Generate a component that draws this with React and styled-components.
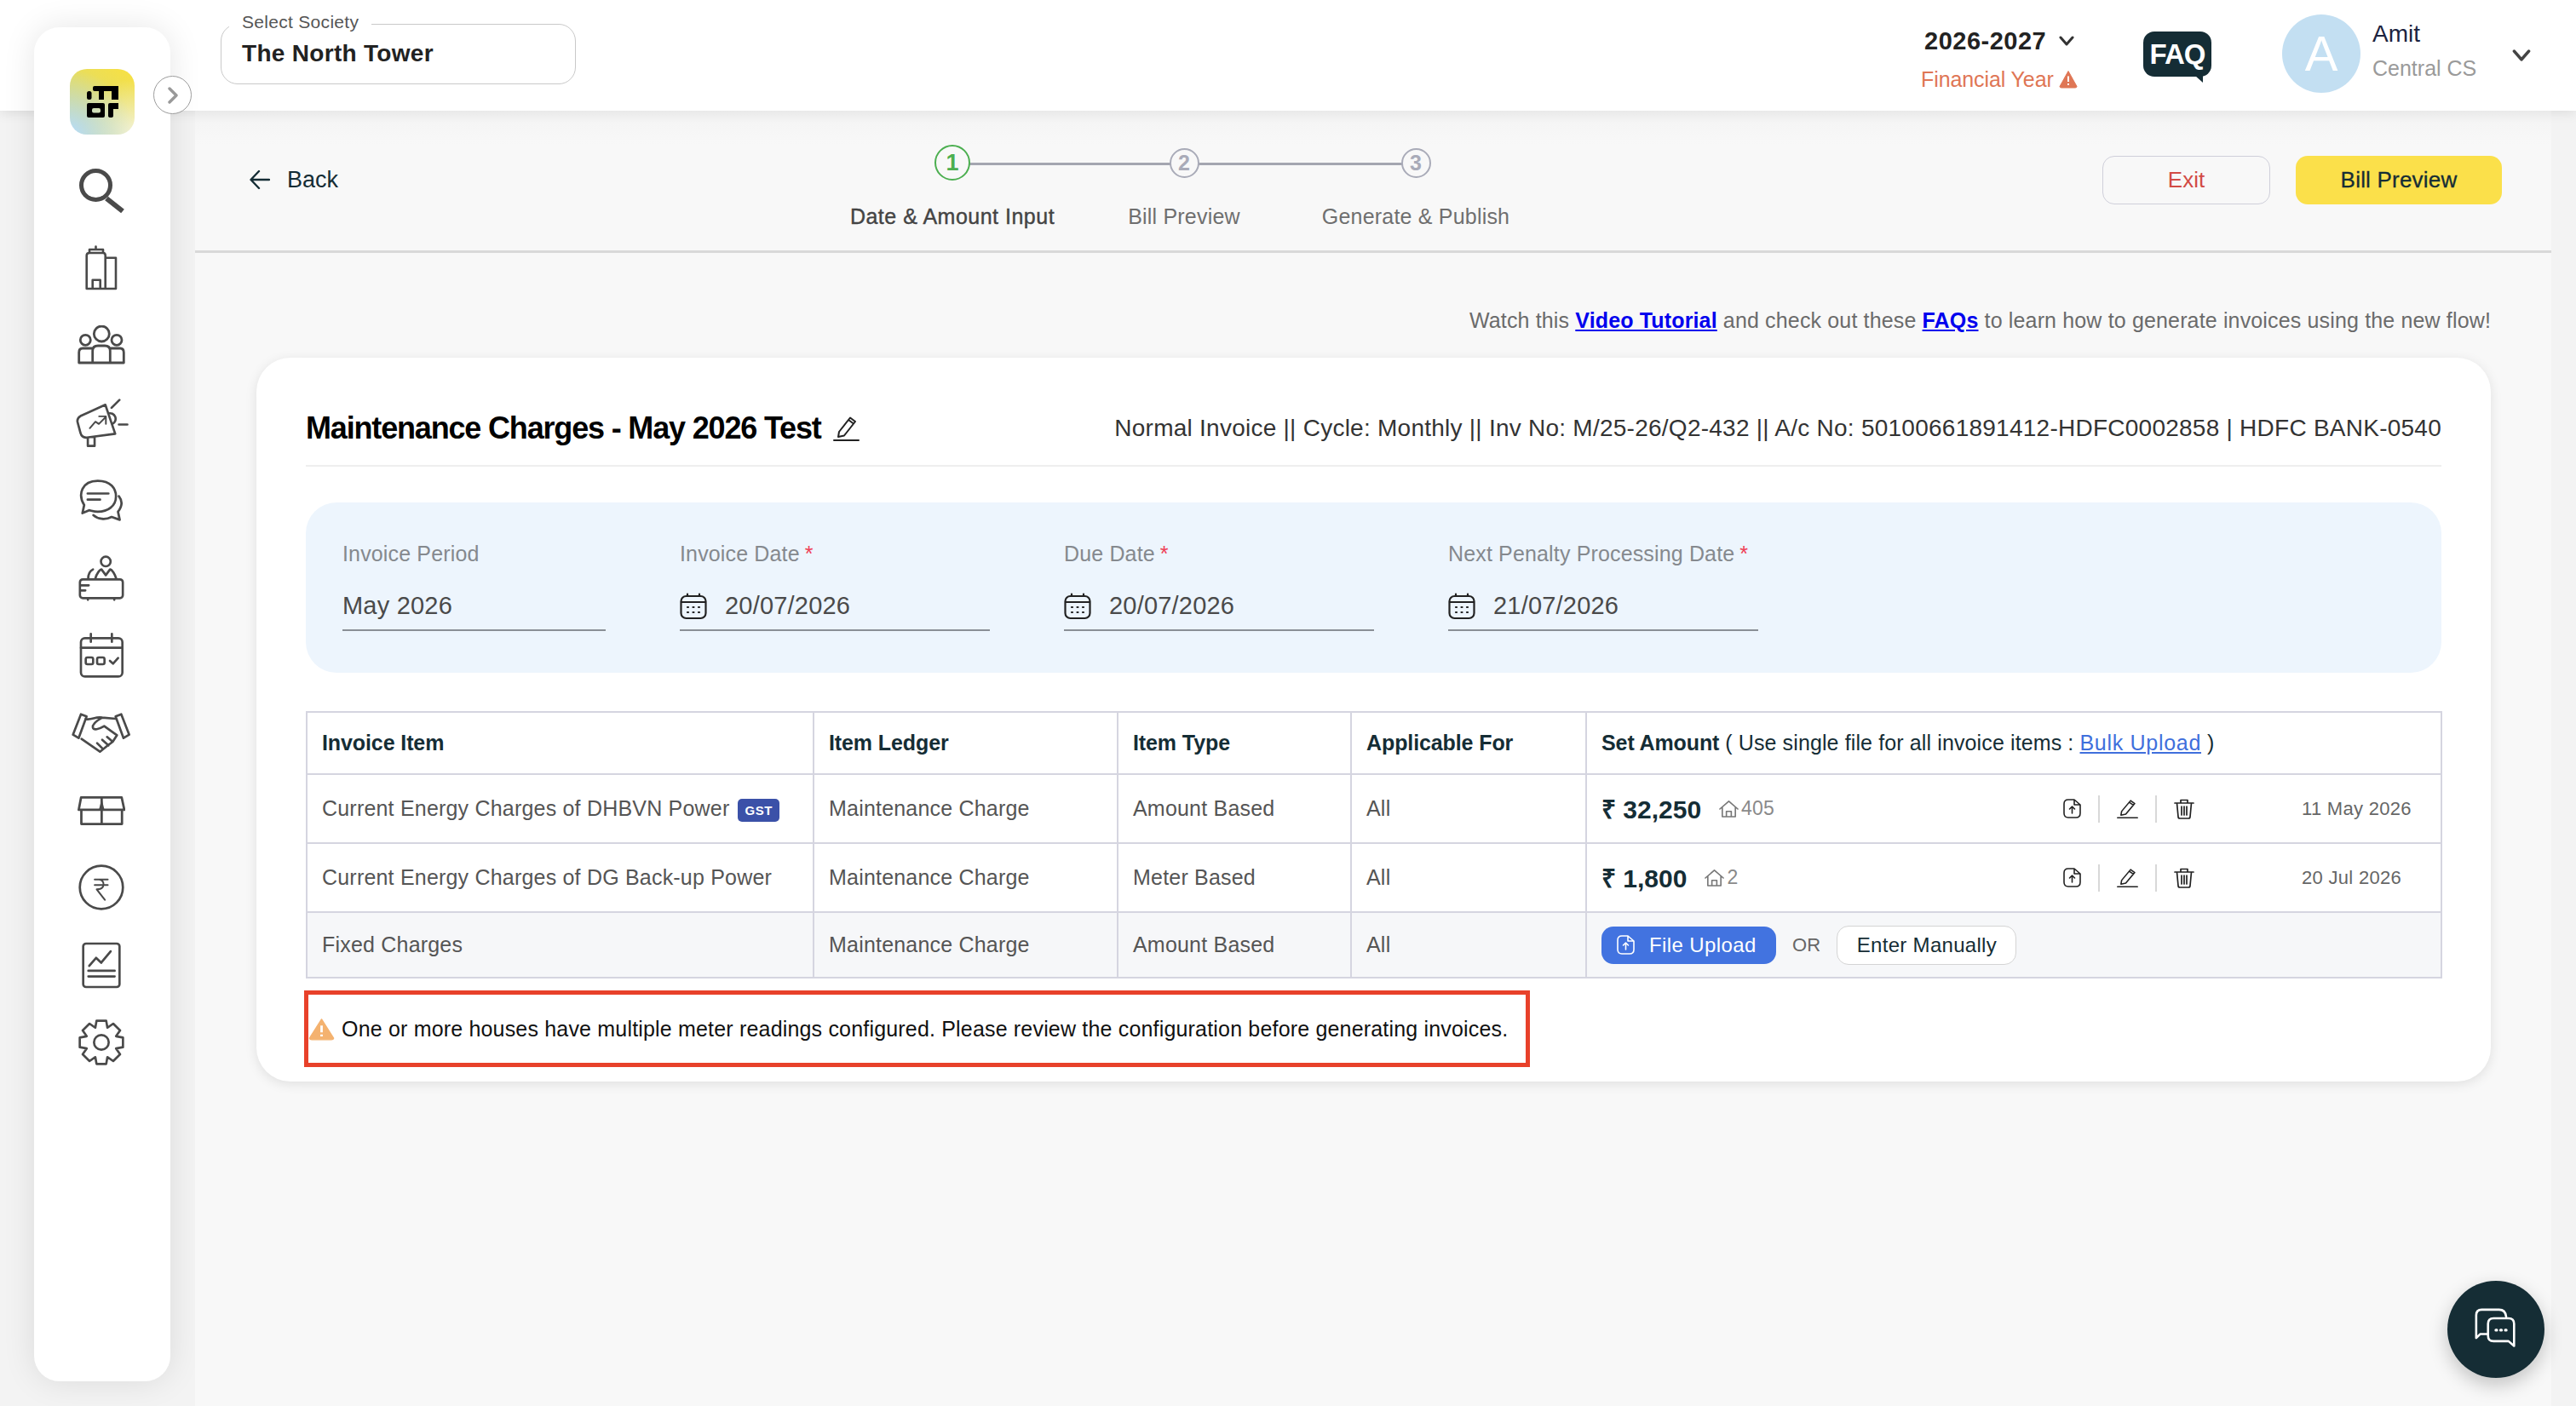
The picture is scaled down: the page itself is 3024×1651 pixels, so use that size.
import React from "react";
import styled, { createGlobalStyle } from "styled-components";

const FONT = `"Liberation Sans", Arial, sans-serif`;
const DARK = "#152d35";

const Global = createGlobalStyle`
	* { box-sizing: border-box; }
	html, body { margin: 0; height: 100%; overflow: hidden; }
	body { background: #f3f3f3; font-family: ${FONT}; color: #333; }
`;

const Page = styled.div`
	display: flex;
	flex-direction: column;
	height: 1651px;
`;

/* header */
const Header = styled.header`
	position: relative;
	z-index: 1;
	display: flex;
	align-items: flex-start;
	height: 130px;
	padding-left: 259px;
	background: #fff;
	box-shadow: 0 2px 14px rgba(0, 0, 0, 0.1);
`;

const SocietyBox = styled.div`
	position: relative;
	width: 417px;
	height: 71px;
	margin-top: 28px;
	padding: 17px 24px;
	border: 1.5px solid #c9c9c9;
	border-radius: 20px;
	font-size: 28px;
	font-weight: 700;
	line-height: 34px;
	color: #222;
	letter-spacing: 0.3px;
`;

const SocietyLabel = styled.span`
	position: absolute;
	left: 9px;
	top: -15px;
	padding: 0 15px;
	background: #fff;
	font-size: 21px;
	font-weight: 400;
	line-height: 24px;
	color: #555;
	letter-spacing: 0.3px;
`;

const HeaderRight = styled.div`
	display: flex;
	align-items: flex-start;
	margin-left: auto;
	padding-right: 53px;
`;

const YearBlock = styled.div`
	display: flex;
	flex-direction: column;
	align-items: flex-start;
	margin-top: 30px;
	width: 261px;
`;

const YearRow = styled.div`
	display: flex;
	align-items: center;
	gap: 15px;
	padding-left: 4px;
	font-size: 29px;
	font-weight: 700;
	line-height: 36px;
	letter-spacing: 0.5px;
	color: #222;
`;

const YearNote = styled.div`
	display: flex;
	align-items: center;
	gap: 6px;
	margin-top: 12px;
	font-size: 25px;
	line-height: 30px;
	letter-spacing: -0.1px;
	color: #df7655;
`;

const FaqBubble = styled.div`
	position: relative;
	width: 80px;
	height: 53px;
	margin-top: 37px;
	border-radius: 13px;
	background: ${DARK};
	color: #fff;
	font-size: 33px;
	font-weight: 700;
	line-height: 53px;
	text-align: center;
	letter-spacing: -1px;

	&::after {
		content: "";
		position: absolute;
		right: 10px;
		bottom: -7px;
		border-top: 8px solid ${DARK};
		border-left: 9px solid transparent;
	}
`;

const Avatar = styled.div`
	display: flex;
	align-items: center;
	justify-content: center;
	width: 92px;
	height: 92px;
	margin: 17px 14px 0 83px;
	border-radius: 50%;
	background: #c3dff2;
	color: #fff;
	font-size: 58px;
	line-height: 1;
`;

const UserBlock = styled.div`
	width: 164px;
	margin-top: 22px;
`;

const UserName = styled.div`
	font-size: 28px;
	line-height: 36px;
	color: #1c2340;
`;

const UserRole = styled.div`
	margin-top: 7px;
	font-size: 25px;
	line-height: 30px;
	color: #9a9a9a;
`;

const UserChevron = styled.div`
	margin-top: 54px;
	line-height: 0;
`;

/* sidebar */
const Sidebar = styled.aside`
	position: fixed;
	z-index: 2;
	left: 40px;
	top: 32px;
	display: flex;
	flex-direction: column;
	align-items: center;
	width: 160px;
	height: 1590px;
	padding-top: 49px;
	border-radius: 30px;
	background: #fff;
	box-shadow: 0 0 38px rgba(0, 0, 0, 0.1);
`;

const Logo = styled.div`
	display: flex;
	align-items: center;
	justify-content: center;
	width: 76px;
	height: 77px;
	margin-bottom: 21px;
	border-radius: 20px;
	background:
		radial-gradient(circle at 0% 100%, #b6dcfb 0, rgba(182, 220, 251, 0) 70%),
		radial-gradient(circle at 100% 100%, #f6f4d8 0, rgba(246, 244, 216, 0) 60%),
		linear-gradient(215deg, #f9e13f 0, #cfd88a 100%);
`;

const CollapseButton = styled.div`
	position: absolute;
	left: 140px;
	top: 57px;
	display: flex;
	align-items: center;
	justify-content: center;
	width: 45px;
	height: 45px;
	border: 1.5px solid #9c9c9c;
	border-radius: 50%;
	background: #fff;
`;

const NavSlot = styled.div`
	display: flex;
	align-items: center;
	justify-content: center;
	width: 100%;
	height: 90.9px;
	padding-right: ${(p) => p.$nudge || 3}px;
`;

/* main */
const Main = styled.main`
	position: relative;
	z-index: 3;
	flex: 1;
	margin: 0 29px 0 229px;
	background: linear-gradient(#e9e9e9 0, #f5f5f5 14px, #f8f8f8 40px);
`;

const TopBar = styled.div`
	display: grid;
	grid-template-columns: 753px 816px 1fr;
	height: 167px;
	border-bottom: 3px solid #d9d9d9;
`;

const BackLink = styled.div`
	display: flex;
	align-items: center;
	gap: 20px;
	height: 162px;
	padding-left: 64px;
	font-size: 27px;
	color: ${DARK};
`;

const Stepper = styled.div`
	display: grid;
	grid-template-columns: repeat(3, 1fr);
	padding-top: 40px;
`;

const Step = styled.div`
	position: relative;
	display: flex;
	flex-direction: column;
	align-items: center;
`;

const StepLine = styled.span`
	position: absolute;
	left: 50%;
	top: 21px;
	width: 100%;
	height: 3px;
	background: #a4a6b0;
`;

const StepCircleRow = styled.div`
	display: flex;
	align-items: center;
	justify-content: center;
	height: 42px;
`;

const StepCircle = styled.div`
	position: relative;
	display: flex;
	align-items: center;
	justify-content: center;
	width: ${(p) => (p.$active ? 42 : 35)}px;
	height: ${(p) => (p.$active ? 42 : 35)}px;
	border: 2.5px solid ${(p) => (p.$active ? "#4caf50" : "#a9abb8")};
	border-radius: 50%;
	background: #f8f8f8;
	color: ${(p) => (p.$active ? "#4caf50" : "#a9abb8")};
	font-size: ${(p) => (p.$active ? 27 : 25)}px;
	font-weight: 700;
	line-height: 1;
`;

const StepLabel = styled.div`
	margin-top: 27px;
	font-size: 25px;
	line-height: 30px;
	white-space: nowrap;
	color: ${(p) => (p.$active ? "#444" : "#6f6f6f")};
	letter-spacing: ${(p) => (p.$active ? 0.5 : 0.2)}px;
	-webkit-text-stroke: ${(p) => (p.$active ? 0.4 : 0)}px #444;
`;

const TopActions = styled.div`
	display: flex;
	justify-content: flex-end;
	gap: 30px;
	padding: 53px 58px 0 0;
`;

const ExitButton = styled.div`
	display: flex;
	align-items: center;
	justify-content: center;
	width: 197px;
	height: 57px;
	border: 1.5px solid #cfcfda;
	border-radius: 14px;
	color: #d24b45;
	font-size: 26px;
`;

const PreviewButton = styled.div`
	display: flex;
	align-items: center;
	justify-content: center;
	width: 242px;
	height: 57px;
	border-radius: 14px;
	background: #fbe04a;
	color: ${DARK};
	font-size: 26px;
	letter-spacing: 0.2px;
	-webkit-text-stroke: 0.3px ${DARK};
`;

const Content = styled.div`
	padding: 0 71px 0 72px;
`;

const InfoLine = styled.div`
	margin: 64px 0 29px;
	font-size: 25px;
	line-height: 30px;
	text-align: right;
	letter-spacing: 0.15px;
	color: #6b6b6b;

	a {
		color: #0000ee;
		font-weight: 700;
		text-decoration: underline;
	}
`;

const Card = styled.section`
	padding: 61px 58px 17px;
	border-radius: 40px;
	background: #fff;
	box-shadow: 0 3px 14px rgba(0, 0, 0, 0.1);
`;

const TitleRow = styled.div`
	display: flex;
	align-items: center;
	justify-content: space-between;
	height: 67px;
	padding-bottom: 21px;
	border-bottom: 2px solid #eeeeee;
`;

const TitleGroup = styled.div`
	display: flex;
	align-items: center;
	gap: 14px;
`;

const Title = styled.h1`
	margin: 0;
	font-size: 36px;
	font-weight: 700;
	line-height: 46px;
	color: #000;
	letter-spacing: -1.17px;
`;

const Meta = styled.div`
	font-size: 28px;
	line-height: 34px;
	letter-spacing: 0.25px;
	color: #333;
`;

const DatePanel = styled.div`
	display: flex;
	gap: 87px;
	height: 200px;
	margin-top: 42px;
	padding: 45px 43px 0;
	border-radius: 36px;
	background: #edf5fd;
`;

const Field = styled.div`
	width: ${(p) => p.$width}px;
`;

const FieldLabel = styled.div`
	font-size: 25px;
	line-height: 30px;
	letter-spacing: 0.15px;
	color: #85898e;

	b {
		color: #ef4056;
		font-weight: 400;
		margin-left: 6px;
	}
`;

const FieldValue = styled.div`
	display: flex;
	align-items: center;
	gap: 21px;
	height: 50px;
	margin-top: 26px;
	padding-bottom: 7px;
	border-bottom: 2px solid #8a8f96;
	font-size: 29px;
	letter-spacing: 0.2px;
	color: #4a4a4a;
`;

const Table = styled.table`
	width: 2506px;
	margin-top: 45px;
	border-collapse: collapse;
	table-layout: fixed;
	font-size: 25px;
	letter-spacing: 0.2px;
	color: #555;

	th,
	td {
		padding: 0 17px;
		border: 2px solid #d5d5e0;
		text-align: left;
		white-space: nowrap;
	}

	th {
		height: 73px;
		font-weight: 700;
		letter-spacing: -0.1px;
		color: ${DARK};
	}
`;

const Row = styled.tr`
	height: ${(p) => (p.$muted ? 77 : 81)}px;
	background: ${(p) => (p.$muted ? "#f6f7f9" : "#fff")};
`;

const SetNote = styled.span`
	font-weight: 400;
	letter-spacing: 0.12px;

	a {
		color: #3f6fdc;
		letter-spacing: 0.7px;
		text-decoration: underline;
	}
`;

const GstBadge = styled.span`
	display: inline-block;
	margin-left: 10px;
	padding: 0 8px;
	border-radius: 5px;
	background: #3b51a8;
	color: #fff;
	font-size: 15px;
	font-weight: 700;
	line-height: 27px;
	letter-spacing: 0.6px;
	vertical-align: 1px;
`;

const AmountCell = styled.div`
	display: grid;
	grid-template-columns: 542px 280px auto;
	align-items: center;
`;

const AmountGroup = styled.div`
	display: flex;
	align-items: center;
	gap: 3px;
`;

const Amount = styled.span`
	margin-right: 18px;
	font-size: 30px;
	font-weight: 700;
	letter-spacing: 0;
	color: ${DARK};
`;

const HouseCount = styled.span`
	font-size: 23px;
	color: #8a8a8a;
`;

const Actions = styled.div`
	display: flex;
	align-items: center;
	gap: 20px;
`;

const ActionDivider = styled.span`
	width: 2px;
	height: 32px;
	background: #d8d8d8;
`;

const UpdatedOn = styled.span`
	font-size: 22px;
	letter-spacing: 0.3px;
	color: #666;
`;

const UploadRow = styled.div`
	display: flex;
	align-items: center;
`;

const UploadButton = styled.div`
	display: flex;
	align-items: center;
	gap: 17px;
	width: 205px;
	height: 44px;
	padding-left: 18px;
	border-radius: 14px;
	background: #4273e0;
	color: #fff;
	font-size: 24px;
	letter-spacing: 0.4px;
`;

const OrText = styled.span`
	margin: 0 19px 0 19px;
	font-size: 22px;
	color: #666;
`;

const ManualButton = styled.div`
	display: flex;
	align-items: center;
	justify-content: center;
	width: 211px;
	height: 46px;
	border: 1.5px solid #d4d4d4;
	border-radius: 14px;
	background: #fff;
	color: ${DARK};
	font-size: 24px;
	letter-spacing: 0.3px;
`;

const WarningBox = styled.div`
	display: flex;
	align-items: center;
	gap: 8px;
	width: 1439px;
	height: 90px;
	margin: 14px 0 0 -2px;
	border: 5px solid #e8412a;
	font-size: 25px;
	letter-spacing: 0.18px;
	color: #111;
`;

const ChatFab = styled.div`
	position: fixed;
	z-index: 5;
	right: 37px;
	bottom: 33px;
	display: flex;
	align-items: center;
	justify-content: center;
	width: 114px;
	height: 114px;
	border-radius: 50%;
	background: ${DARK};
	box-shadow: 0 8px 22px rgba(0, 0, 0, 0.22);
`;

/* drawings */
const Ico = styled.svg.attrs((p) => ({
	fill: "none",
	stroke: p.$color || "#4a4a4a",
	strokeLinecap: "round",
	strokeLinejoin: "round",
}))`
	display: block;
	flex: none;
`;

const gearPath = () => {
	const pts = [];
	const cx = 354;
	const cy = 1155;
	for (let i = 0; i < 8; i++) {
		const a = (i * Math.PI) / 4 - Math.PI / 2;
		[
			[-0.39, 56],
			[-0.22, 78],
			[0.22, 78],
			[0.39, 56],
		].forEach(([d, r]) => {
			pts.push(`${(cx + r * Math.cos(a + d)).toFixed(1)} ${(cy + r * Math.sin(a + d)).toFixed(1)}`);
		});
	}
	return `M${pts.join("L")}Z`;
};

const navIcons = [
	<Ico key='search' width='58' height='58' viewBox='90 195 58 58' strokeWidth='5'>
		<circle cx='112.5' cy='217.5' r='17' />
		<path d='M125 233 L144 248' strokeLinecap='butt' strokeWidth='6' />
	</Ico>,
	<Ico key='building' width='38' height='54' viewBox='99 291 38 54' strokeWidth='2.6' strokeLinejoin='miter'>
		<path d='M100.7 342V303Q100.7 300 104 300H120Q122.7 300 122.7 303V342ZM122.7 305.7H135V342H122.7M104 300V296H120V300M111.5 296V292.5M107.7 342V331.7H116.7V342' />
	</Ico>,
	<Ico key='people' width='56' height='48' viewBox='90 385 56 48' strokeWidth='2.8'>
		<circle cx='118.3' cy='395' r='9' />
		<circle cx='99.3' cy='402.3' r='6' />
		<circle cx='136' cy='402.3' r='6' />
		<path d='M107.7 429V415Q107.7 409 114 409H122Q128.3 409 128.3 415V429M107.7 412H96Q91.7 412 91.7 417V429H144.3V417Q144.3 412 140 412H128.3' />
	</Ico>,
	<Ico key='announce' width='65' height='58' viewBox='270 150 195 175' strokeWidth='8'>
		<path d='M380 172L292 212Q278 220 282 235L292 272Q297 290 315 288L415 275ZM318 290V318H342V288M390 203A20 20 0 0 1 405 240M402 183L430 155M428 242H458' />
		<path d='M325 255L345 232L357 240L382 215M358 213H382V240' strokeWidth='6' />
	</Ico>,
	<Ico key='chat' width='56' height='52' viewBox='270 436 165 152' strokeWidth='8'>
		<path d='M287 555L293 527C270 490 285 443 340 443C385 443 403 470 403 497C403 530 375 550 340 550C325 550 315 545 310 545ZM413 496C428 515 422 535 410 550L416 578L388 568C365 580 340 575 325 562' />
		<path d='M305 487H377M305 508H348' />
	</Ico>,
	<Ico key='reception' width='56' height='54' viewBox='272 702 165 162' strokeWidth='8'>
		<circle cx='370' cy='724' r='17' />
		<path d='M333 785C338 765 350 752 355 752L370 772L385 752C392 752 403 770 407 785M308 785C308 770 313 758 325 752M281 808H310M281 826H298M307 853V859M400 853V859' />
		<rect x='279' y='787' width='151' height='66' rx='10' />
	</Ico>,
	<Ico key='calendar' width='52' height='54' viewBox='273 972 156 160' strokeWidth='8'>
		<rect x='279' y='990' width='146' height='135' rx='14' />
		<path d='M279 1024H425M314 975V1003M388 975V1003M381 1070L392 1080L410 1060' />
		<rect x='296' y='1058' width='26' height='24' rx='6' />
		<rect x='336' y='1058' width='26' height='24' rx='6' />
	</Ico>,
	<Ico key='handshake' width='70' height='50' viewBox='250 -10 210 150' strokeWidth='8'>
		<path d='M283 -2L303 6L275 82L255 70ZM425 -2L405 6L433 82L453 70Z' />
		<path d='M300 15C320 20 335 5 358 10L405 14M358 10C340 20 322 32 325 45C328 55 345 52 365 40L410 72L395 95L375 110L350 130L285 85M340 100L358 118M358 88L380 108M375 78L395 95' />
	</Ico>,
	<Ico key='box' width='56' height='34' viewBox='273 284 162 98' strokeWidth='8'>
		<path d='M285 288H423L432 330H277ZM286 330V378H424V330M355 288V378' />
		<path d='M355 292L346 328H364Z' fill='#4a4a4a' stroke='none' />
	</Ico>,
	<Ico key='rupee' width='54' height='54' viewBox='279 536 158 158' strokeWidth='8'>
		<circle cx='358' cy='615' r='74' />
		<path d='M335 588H380M335 607H380M350 588C372 590 372 622 342 622L370 658' strokeWidth='6' />
	</Ico>,
	<Ico key='report' width='46' height='55' viewBox='290 800 137 162' strokeWidth='8'>
		<rect x='295' y='805' width='127' height='152' rx='10' />
		<path d='M316 883L340 855L358 872L391 832M313 900H405M313 920H405' />
	</Ico>,
	<Ico key='gear' width='56' height='56' viewBox='270 1071 168 168' strokeWidth='8'>
		<path d={gearPath()} />
		<circle cx='354' cy='1155' r='26' />
	</Ico>,
];

const LogoMark = () => (
	<svg width='37' height='37' viewBox='0 0 37 37' fill='#000'>
		<path d='M9 0H37V16H29V6H20V16H14V6H9Q7 6 7 4V2Q7 0 9 0Z' />
		<rect x='0' y='6' width='5.5' height='10' rx='2.5' />
		<path fillRule='evenodd' d='M2 20H19Q21 20 21 22V35Q21 37 19 37H2Q0 37 0 35V22Q0 20 2 20ZM8 26Q6 26 6 28V29.5Q6 31.5 8 31.5H14Q16 31.5 16 29.5V28Q16 26 14 26Z' />
		<path d='M27 20H37V27H31V35Q31 37 28 37Q25 37 25 35V22Q25 20 27 20Z' />
	</svg>
);

const Chevron = ({ size = 18, color = "#333", width = 3 }) => (
	<Ico $color={color} width={size} height={size} viewBox='0 0 18 18' strokeWidth={width}>
		<path d='M2 5L9 13L16 5' />
	</Ico>
);

const PenIcon = ({ w = 25, h = 22 }) => (
	<Ico $color='#222' width={w} height={h} viewBox='0 0 31 29' preserveAspectRatio='none' strokeWidth='2'>
		<path d='M7 18L20 1.5L26 6L13 22.5L6 24ZM18 4L24 8.5M1 28H30' />
	</Ico>
);

const TrashIcon = () => (
	<Ico $color='#222' width='24' height='24' viewBox='0 0 24 24' strokeWidth='1.7'>
		<path d='M1 5H23M8 5V1.5H16V5M3.5 5L5 21Q5 23 7 23H17Q19 23 19 21L20.5 5M9 9V19M12 9V19M15 9V19' />
	</Ico>
);

const FileUpIcon = ({ color = "#222" }) => (
	<Ico $color={color} width='21' height='23' viewBox='0 0 21 23' strokeWidth='1.6'>
		<path d='M6 1H13L20 7V17Q20 22 15 22H6Q1 22 1 17V6Q1 1 6 1ZM13 1V7H20M10.5 17V9M7.5 12L10.5 9L13.5 12' />
	</Ico>
);

const HouseIcon = () => (
	<Ico $color='#777' width='23' height='20' viewBox='0 0 24 22' preserveAspectRatio='none' strokeWidth='1.7'>
		<path d='M1 11L12 1L23 11M4 9V21H20V9M9 21V14H15V21' />
	</Ico>
);

const CalendarIcon = () => (
	<Ico $color='#222' width='32' height='32' viewBox='0 0 32 32' strokeWidth='2.2'>
		<rect x='1.5' y='4' width='29' height='26' rx='6' />
		<path d='M2 11H30M9 1.5V4M23 1.5V4' />
		<path d='M9 17H10M15.5 17H16.5M22 17H23M9 23H10M15.5 23H16.5M22 23H23' />
	</Ico>
);

const WarnIcon = ({ w = 22, h = 22, color = "#df7655" }) => (
	<svg width={w} height={h} viewBox='0 0 22 22' preserveAspectRatio='none'>
		<path d='M11 1.5L21 19.5Q21 21 19 21H3Q1 21 1 19.5Z' fill={color} stroke={color} strokeLinejoin='round' />
		<path d='M10 7.5H12V14H10ZM10 16H12V18H10Z' fill='#fff' />
	</svg>
);

const ChatIcon = () => (
	<Ico $color='#fff' width='50' height='50' viewBox='0 0 54 54' strokeWidth='2.8'>
		<path d='M16 33H7L2 38V9Q2 2 9 2H31Q39 2 40 11' />
		<path d='M24 13H43Q50 13 50 20V48L43 42H24Q17 42 17 35V20Q17 13 24 13Z' />
		<path d='M27 28H28M33 28H34M39 28H40' strokeWidth='3.6' />
	</Ico>
);

const dateFields = [
	{ label: "Invoice Date", value: "20/07/2026" },
	{ label: "Due Date", value: "20/07/2026" },
	{ label: "Next Penalty Processing Date", value: "21/07/2026" },
];

const steps = [
	{ n: 1, label: "Date & Amount Input", active: true },
	{ n: 2, label: "Bill Preview" },
	{ n: 3, label: "Generate & Publish" },
];

const filledRows = [
	{ item: "Current Energy Charges of DHBVN Power", gst: true, type: "Amount Based", amount: "32,250", houses: 405, date: "11 May 2026" },
	{ item: "Current Energy Charges of DG Back-up Power", type: "Meter Based", amount: "1,800", houses: 2, date: "20 Jul 2026" },
];

const App = () => {
	return (
		<Page>
			<Global />
			<Sidebar>
				<Logo>
					<LogoMark />
				</Logo>
				<CollapseButton>
					<Ico $color='#999' width='14' height='20' viewBox='0 0 14 20' strokeWidth='3.4'>
						<path d='M3 2L11 10L3 18' />
					</Ico>
				</CollapseButton>
				{navIcons.map((icon) => (
					<NavSlot key={icon.key} $nudge={icon.key === "announce" ? 1 : 3}>
						{icon}
					</NavSlot>
				))}
			</Sidebar>

			<Header>
				<SocietyBox>
					<SocietyLabel>Select Society</SocietyLabel>
					The North Tower
				</SocietyBox>
				<HeaderRight>
					<YearBlock>
						<YearRow>
							2026-2027
							<Chevron size={18} />
						</YearRow>
						<YearNote>
							Financial Year
							<WarnIcon />
						</YearNote>
					</YearBlock>
					<FaqBubble>FAQ</FaqBubble>
					<Avatar>A</Avatar>
					<UserBlock>
						<UserName>Amit</UserName>
						<UserRole>Central CS</UserRole>
					</UserBlock>
					<UserChevron>
						<Chevron size={22} color='#444' />
					</UserChevron>
				</HeaderRight>
			</Header>

			<Main>
				<TopBar>
					<BackLink>
						<Ico $color={DARK} width='24' height='24' viewBox='0 0 24 24' strokeWidth='2.4'>
							<path d='M23 12H2M11 2L1.5 12L11 22' />
						</Ico>
						Back
					</BackLink>
					<Stepper>
						{steps.map((step) => (
							<Step key={step.n}>
								{step.n < 3 && <StepLine />}
								<StepCircleRow>
									<StepCircle $active={step.active}>{step.n}</StepCircle>
								</StepCircleRow>
								<StepLabel $active={step.active}>{step.label}</StepLabel>
							</Step>
						))}
					</Stepper>
					<TopActions>
						<ExitButton>Exit</ExitButton>
						<PreviewButton>Bill Preview</PreviewButton>
					</TopActions>
				</TopBar>

				<Content>
					<InfoLine>
						Watch this <a href='#video'>Video Tutorial</a> and check out these <a href='#faqs'>FAQs</a> to learn how to
						generate invoices using the new flow!
					</InfoLine>
					<Card>
						<TitleRow>
							<TitleGroup>
								<Title>Maintenance Charges - May 2026 Test</Title>
								<PenIcon w={31} h={29} />
							</TitleGroup>
							<Meta>
								Normal Invoice || Cycle: Monthly || Inv No: M/25-26/Q2-432 || A/c No: 50100661891412-HDFC0002858 | HDFC
								BANK-0540
							</Meta>
						</TitleRow>

						<DatePanel>
							<Field $width={309}>
								<FieldLabel>Invoice Period</FieldLabel>
								<FieldValue>May 2026</FieldValue>
							</Field>
							{dateFields.map((field) => (
								<Field key={field.label} $width={364}>
									<FieldLabel>
										{field.label}
										<b>*</b>
									</FieldLabel>
									<FieldValue>
										<CalendarIcon />
										{field.value}
									</FieldValue>
								</Field>
							))}
						</DatePanel>

						<Table>
							<colgroup>
								<col width='595' />
								<col width='357' />
								<col width='274' />
								<col width='276' />
								<col width='1004' />
							</colgroup>
							<thead>
								<tr>
									<th>Invoice Item</th>
									<th>Item Ledger</th>
									<th>Item Type</th>
									<th>Applicable For</th>
									<th>
										Set Amount{" "}
										<SetNote>
											( Use single file for all invoice items : <a href='#bulk'>Bulk Upload</a> )
										</SetNote>
									</th>
								</tr>
							</thead>
							<tbody>
								{filledRows.map((row) => (
									<Row key={row.item}>
										<td>
											{row.item}
											{row.gst && <GstBadge>GST</GstBadge>}
										</td>
										<td>Maintenance Charge</td>
										<td>{row.type}</td>
										<td>All</td>
										<td>
											<AmountCell>
												<AmountGroup>
													<Amount>₹ {row.amount}</Amount>
													<HouseIcon />
													<HouseCount>{row.houses}</HouseCount>
												</AmountGroup>
												<Actions>
													<FileUpIcon />
													<ActionDivider />
													<PenIcon />
													<ActionDivider />
													<TrashIcon />
												</Actions>
												<UpdatedOn>{row.date}</UpdatedOn>
											</AmountCell>
										</td>
									</Row>
								))}
								<Row $muted>
									<td>Fixed Charges</td>
									<td>Maintenance Charge</td>
									<td>Amount Based</td>
									<td>All</td>
									<td>
										<UploadRow>
											<UploadButton>
												<FileUpIcon color='#fff' />
												File Upload
											</UploadButton>
											<OrText>OR</OrText>
											<ManualButton>Enter Manually</ManualButton>
										</UploadRow>
									</td>
								</Row>
							</tbody>
						</Table>

						<WarningBox>
							<WarnIcon w={31} h={27} color='#f4b26f' />
							One or more houses have multiple meter readings configured. Please review the configuration before
							generating invoices.
						</WarningBox>
					</Card>
				</Content>
			</Main>

			<ChatFab>
				<ChatIcon />
			</ChatFab>
		</Page>
	);
};

export default App;
